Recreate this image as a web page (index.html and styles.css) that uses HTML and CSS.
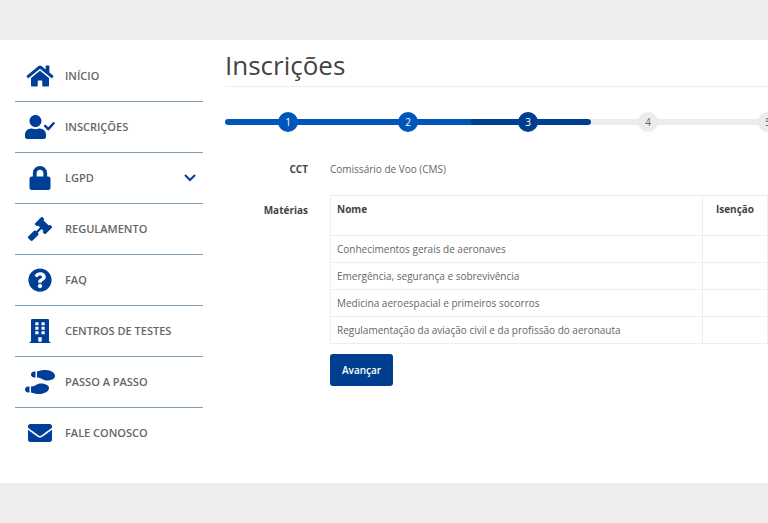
FILE: index.html
```html
<!DOCTYPE html>
<html lang="pt-BR">
<head>
    <meta charset="UTF-8">
    <meta name="viewport" content="width=device-width, initial-scale=1.0">
    <title>Inscrições</title>
    <link rel="stylesheet" href="styles.css">
</head>
<body>

    <div class="container">
        <nav class="menu">
            <ul>
                <li>
                    <a href="#">
                        <svg class="icon" viewBox="0 0 576 512"><path d="M280.37 148.26L96 300.11V464a16 16 0 0 0 16 16l112.06-.29a16 16 0 0 0 15.92-16V368a16 16 0 0 1 16-16h64a16 16 0 0 1 16 16v95.64a16 16 0 0 0 16 16.05L464 480a16 16 0 0 0 16-16V300L295.67 148.26a12.19 12.19 0 0 0-15.3 0zM571.6 251.47L488 182.56V44.05a12 12 0 0 0-12-12h-56a12 12 0 0 0-12 12v72.61L318.47 43a48 48 0 0 0-61 0L4.34 251.47a12 12 0 0 0-1.6 16.9l25.5 31A12 12 0 0 0 45.15 301l235.22-193.74a12.19 12.19 0 0 1 15.3 0L530.9 301a12 12 0 0 0 16.9-1.6l25.5-31a12 12 0 0 0-1.7-16.93z"/></svg>
                        <span>INÍCIO</span>
                    </a>
                </li>
                <li>
                    <a href="#">
                        <svg class="icon" viewBox="0 0 640 512"><path d="M224 256c70.7 0 128-57.3 128-128S294.7 0 224 0 96 57.3 96 128s57.3 128 128 128zm89.6 32h-16.7c-22.2 10.2-46.9 16-72.9 16s-50.6-5.8-72.9-16h-16.7C60.2 288 0 348.2 0 422.4V464c0 26.5 21.5 48 48 48h352c26.5 0 48-21.5 48-48v-41.6c0-74.2-60.2-134.4-134.4-134.4z"/><path class="check" d="M430 234l66 66 114-124"/></svg>
                        <span>INSCRIÇÕES</span>
                    </a>
                </li>
                <li>
                    <a href="#">
                        <svg class="icon" viewBox="0 0 448 512"><path d="M400 224h-24v-72C376 68.2 307.8 0 224 0S72 68.2 72 152v72H48c-26.5 0-48 21.5-48 48v192c0 26.5 21.5 48 48 48h352c26.5 0 48-21.5 48-48V272c0-26.5-21.5-48-48-48zm-104 0H152v-72c0-39.7 32.3-72 72-72s72 32.3 72 72v72z"/></svg>
                        <span>LGPD</span>
                        <svg class="arrow" viewBox="0 0 12 12"><path d="M1 3l5 5 5-5"/></svg>
                    </a>
                </li>
                <li>
                    <a href="#">
                        <svg class="icon" viewBox="0 0 512 512"><path d="M504.971 199.362l-22.627-22.627c-9.373-9.373-24.569-9.373-33.941 0l-5.657 5.657L329.608 69.255l5.657-5.657c9.373-9.373 9.373-24.569 0-33.941L312.638 7.029c-9.373-9.373-24.569-9.373-33.941 0L154.246 131.48c-9.373 9.373-9.373 24.569 0 33.941l22.627 22.627c9.373 9.373 24.569 9.373 33.941 0l5.657-5.657 39.598 39.598-81.04 81.04-5.657-5.657c-12.497-12.497-32.758-12.497-45.255 0L9.373 412.118c-12.497 12.497-12.497 32.758 0 45.255l45.255 45.255c12.497 12.497 32.758 12.497 45.255 0l114.745-114.745c12.497-12.497 12.497-32.758 0-45.255l-5.657-5.657 81.04-81.04 39.598 39.598-5.657 5.657c-9.373 9.373-9.373 24.569 0 33.941l22.627 22.627c9.373 9.373 24.569 9.373 33.941 0l124.451-124.451c9.372-9.372 9.372-24.568 0-33.941z"/></svg>
                        <span>REGULAMENTO</span>
                    </a>
                </li>
                <li>
                    <a href="#">
                        <svg class="icon" viewBox="0 0 512 512"><path d="M504 256c0 136.997-111.043 248-248 248S8 392.997 8 256C8 119.083 119.043 8 256 8s248 111.083 248 248zM262.655 90c-54.497 0-89.255 22.957-116.549 63.758-3.536 5.286-2.353 12.415 2.715 16.258l34.699 26.31c5.205 3.947 12.621 3.008 16.665-2.122 17.864-22.658 30.113-35.797 57.303-35.797 20.429 0 45.698 13.148 45.698 32.958 0 14.976-12.363 22.667-32.534 33.976C247.128 238.528 216 254.941 216 296v4c0 6.627 5.373 12 12 12h56c6.627 0 12-5.373 12-12v-1.333c0-28.462 83.186-29.647 83.186-106.667 0-58.002-60.165-102-116.531-102zM256 338c-25.365 0-46 20.635-46 46 0 25.364 20.635 46 46 46s46-20.636 46-46c0-25.365-20.635-46-46-46z"/></svg>
                        <span>FAQ</span>
                    </a>
                </li>
                <li>
                    <a href="#">
                        <svg class="icon" viewBox="0 0 448 512"><path fill-rule="evenodd" d="M0 496a12 12 0 0 1 12-12h20V24A24 24 0 0 1 56 0h336a24 24 0 0 1 24 24v460h20a12 12 0 0 1 12 12v16H0zM124 68v64h68V68zM256 68v64h68V68zM124 164v64h68v-64zM256 164v64h68v-64zM124 260v64h68v-64zM256 260v64h68v-64zM188 388v96h72v-96z"/></svg>
                        <span>CENTROS DE TESTES</span>
                    </a>
                </li>
                <li>
                    <a href="#">
                        <svg class="icon" viewBox="0 0 640 512"><path d="M192 160h32V32h-32c-35.35 0-64 28.65-64 64s28.65 64 64 64zM0 416c0 35.35 28.65 64 64 64h32V352H64c-35.35 0-64 28.65-64 64zm337.46-128c-34.91 0-76.16 13.12-104.73 32-24.79 16.38-44.52 32-104.73 32v128l57.53 15.97c26.21 7.28 53.01 13.12 80.31 15.05 32.69 2.31 65.6.67 97.58-6.2C472.9 481.3 512 429.22 512 384c0-64-84.18-96-174.54-96zM491.42 7.25C459.44.32 426.53-1.33 393.84.99c-27.3 1.93-54.1 7.77-80.31 15.04L256 32v128c60.2 0 79.94 15.62 104.73 32 28.57 18.88 69.82 32 104.73 32C555.82 224 640 192 640 128c0-45.22-39.1-97.3-148.58-120.75z"/></svg>
                        <span>PASSO A PASSO</span>
                    </a>
                </li>
                <li>
                    <a href="#">
                        <svg class="icon" viewBox="0 0 512 512"><path d="M502.3 190.8c3.9-3.1 9.7-.2 9.7 4.7V400c0 26.5-21.5 48-48 48H48c-26.5 0-48-21.5-48-48V195.6c0-5 5.7-7.8 9.7-4.7 22.4 17.4 52.1 39.5 154.1 113.6 21.1 15.4 56.7 47.8 92.2 47.6 35.7.3 72-32.8 92.3-47.6 102-74.1 131.6-96.3 154-113.7zM256 320c23.2.4 56.6-29.2 73.4-41.4 132.7-96.3 142.8-104.7 173.4-128.7 5.8-4.5 9.2-11.5 9.2-18.9v-19c0-26.5-21.5-48-48-48H48c-26.5 0-48 21.5-48 48v19c0 7.4 3.4 14.3 9.2 18.9 30.6 23.9 40.7 32.4 173.4 128.7 16.8 12.2 50.2 41.8 73.4 41.4z"/></svg>
                        <span>FALE CONOSCO</span>
                    </a>
                </li>
            </ul>
        </nav>

        <main class="content">
            <h1>Inscrições</h1>

            <!-- Etapas da inscrição -->
            <ol class="steps">
                <li class="done"><span>1</span></li>
                <li class="done"><span>2</span></li>
                <li class="active"><span>3</span></li>
                <li><span>4</span></li>
                <li><span>5</span></li>
            </ol>

            <form class="form">
                <div class="form-label">CCT</div>
                <div class="form-value">Comissário de Voo (CMS)</div>

                <div class="form-label form-label-table" id="materias">Matérias</div>
                <div class="form-value">
                    <table aria-labelledby="materias">
                        <thead>
                            <tr><th>Nome</th><th class="exempt">Isenção</th></tr>
                        </thead>
                        <tbody>
                            <tr><td>Conhecimentos gerais de aeronaves</td><td></td></tr>
                            <tr><td>Emergência, segurança e sobrevivência</td><td></td></tr>
                            <tr><td>Medicina aeroespacial e primeiros socorros</td><td></td></tr>
                            <tr><td>Regulamentação da aviação civil e da profissão do aeronauta</td><td></td></tr>
                        </tbody>
                    </table>
                    <button type="button" class="btn">Avançar</button>
                </div>
            </form>
        </main>
    </div>

</body>
</html>
```

FILE: styles.css
```css
* {
    box-sizing: border-box;
}

body {
    font-family: 'Open Sans', 'Noto Sans', sans-serif;
    font-size: 10px;
    line-height: 16px;
    margin: 0;
    padding: 40px 0;
    background-color: #eeecec;
    color: #666;
}

.container {
    display: flex;
    gap: 22px;
    padding: 11px 0 25px 15px;
    background-color: #fff;
}

.menu {
    flex: 0 0 188px;
}

.menu ul {
    list-style: none;
    margin: 0;
    padding: 0;
}

.menu li {
    border-bottom: 1px solid #7f9fb8;
}

.menu li:last-child {
    border-bottom: none;
}

.menu a {
    display: flex;
    align-items: center;
    height: 50px;
    padding-right: 7px;
    color: #666;
    font-size: 11px;
    font-weight: 600;
    text-decoration: none;
}

.menu .icon {
    width: 50px;
    height: 24px;
    fill: #003f98;
}

.menu .check {
    fill: none;
    stroke: #003f98;
    stroke-width: 54;
    stroke-linecap: round;
    stroke-linejoin: round;
}

.menu .arrow {
    width: 12px;
    height: 12px;
    margin-left: auto;
    fill: none;
    stroke: #003f98;
    stroke-width: 2;
}

.content {
    flex: 1;
    min-width: 0;
}

.content h1 {
    margin: 0;
    padding-bottom: 7px;
    border-bottom: 1px solid #eee;
    color: #444;
    font-size: 26px;
    font-weight: 400;
    line-height: 28px;
}

.steps {
    display: flex;
    list-style: none;
    margin: 25px 0 0;
    padding: 0 0 0 3px;
    overflow: hidden;
}

.steps li {
    position: relative;
    display: flex;
    flex: 0 0 calc(100% / 4.5);
    justify-content: center;
}

/* linha atrás dos números */
.steps li::before {
    content: '';
    position: absolute;
    top: 7px;
    left: 3px;
    right: -3px;
    height: 6px;
    background-color: #ececec;
}

.steps li:first-child::before {
    left: -3px;
    border-radius: 3px 0 0 3px;
}

.steps span {
    position: relative;
    width: 20px;
    height: 20px;
    border-radius: 50%;
    background-color: #ececec;
    line-height: 20px;
    text-align: center;
}

.steps .done::before,
.steps .done span {
    background-color: #0056b8;
    color: #fff;
}

.steps .active {
    z-index: 1;
}

.steps .active::before,
.steps .active span {
    background-color: #003f90;
    color: #fff;
}

.steps .active::before {
    border-radius: 0 3px 3px 0;
}

.form {
    display: grid;
    grid-template-columns: 83px 1fr;
    column-gap: 22px;
    row-gap: 18px;
    margin-top: 29px;
}

.form-label {
    color: #444;
    font-weight: 700;
    text-align: right;
}

.form-label-table {
    padding-top: 7px;
}

table {
    width: 100%;
    border-collapse: collapse;
}

th,
td {
    padding: 5px 6px;
    border: 1px solid #eee;
    text-align: left;
    vertical-align: top;
}

td {
    height: 27px;
}

th {
    height: 40px;
    color: #444;
}

.exempt {
    width: 65px;
    text-align: center;
}

.btn {
    margin-top: 10px;
    padding: 8px 12px;
    border: none;
    border-radius: 3px;
    background-color: #003f90;
    color: #fff;
    font-family: inherit;
    font-size: 10px;
    font-weight: 600;
    line-height: 16px;
    cursor: pointer;
}
```
